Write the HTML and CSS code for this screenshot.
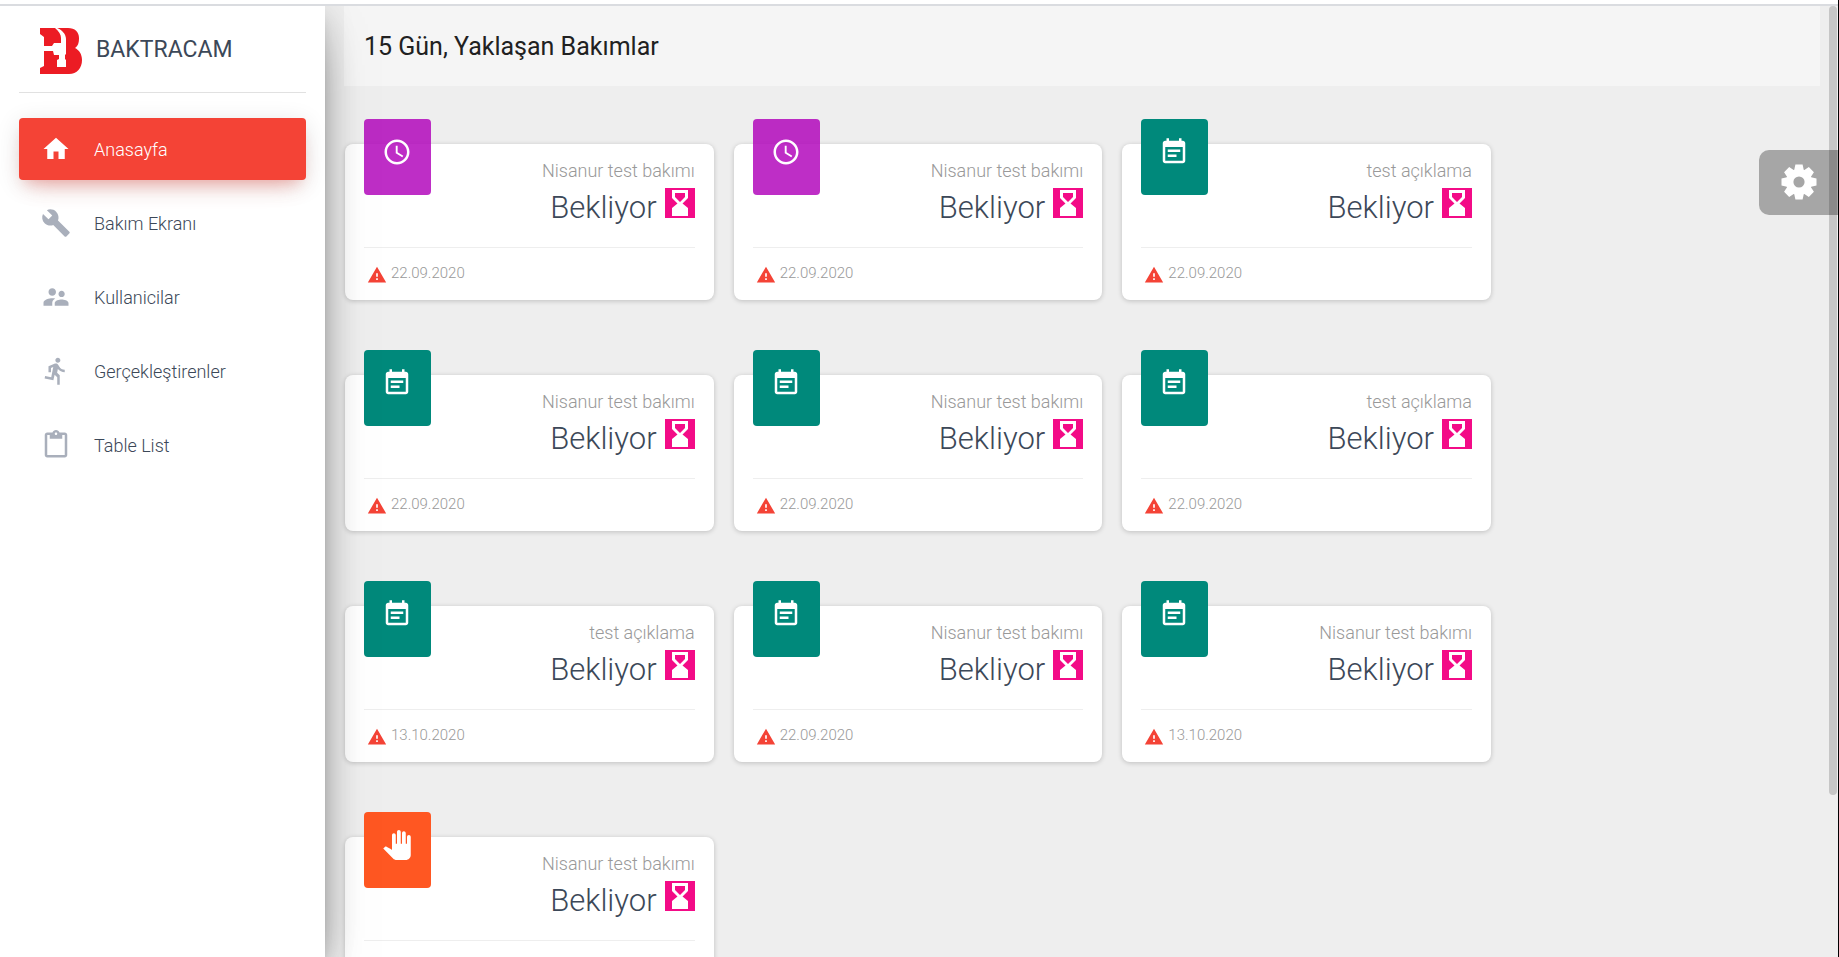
FILE: index.html
```html
<!DOCTYPE html>
<html lang="tr">
<head>
<meta charset="utf-8">
<title>Baktracam</title>
<link rel="stylesheet" href="styles.css">
</head>
<body>
<svg class="sprite" aria-hidden="true">
  <symbol id="home" viewBox="0 0 24 24"><path d="M10 20v-6h4v6h5v-8h3L12 3 2 12h3v8z"/></symbol>
  <symbol id="build" viewBox="0 0 24 24"><path d="M22.7 19l-9.1-9.1c.9-2.3.4-5-1.5-6.9-2-2-5-2.4-7.4-1.3L9 6 6 9 1.6 4.7C.4 7.1.9 10.1 2.9 12.1c1.9 1.9 4.6 2.4 6.9 1.5l9.1 9.1c.4.4 1 .4 1.4 0l2.3-2.3c.5-.4.5-1.1.1-1.4z"/></symbol>
  <symbol id="people" viewBox="0 0 24 24"><path d="M16.5 12c1.38 0 2.49-1.12 2.49-2.5S17.88 7 16.5 7 14 8.12 14 9.5s1.12 2.5 2.5 2.5zM9 11c1.66 0 2.99-1.34 2.99-3S10.66 5 9 5 6 6.34 6 8s1.34 3 3 3zm7.5 3c-1.83 0-5.5.92-5.5 2.75V19h11v-2.25c0-1.83-3.67-2.75-5.5-2.75zM9 13c-2.33 0-7 1.17-7 3.5V19h7v-2.25c0-.85.33-2.34 2.37-3.47C10.5 13.1 9.66 13 9 13z"/></symbol>
  <symbol id="run" viewBox="0 0 24 24"><path d="M13.49 5.48c1.1 0 2-.9 2-2s-.9-2-2-2-2 .9-2 2 .9 2 2 2zm-3.6 13.9l1-4.4 2.1 2v6h2v-7.5l-2.1-2 .6-3c1.3 1.5 3.3 2.5 5.5 2.5v-2c-1.9 0-3.5-1-4.3-2.4l-1-1.6c-.4-.6-1-1-1.7-1-.3 0-.5.1-.8.1l-5.2 2.2v4.7h2v-3.4l1.8-.7-1.6 8.1-4.9-1-.4 2 7 1.4z"/></symbol>
  <symbol id="paste" viewBox="0 0 24 24"><path d="M19 2h-4.180C14.4.84 13.3 0 12 0c-1.3 0-2.4.84-2.820 2H5c-1.1 0-2 .9-2 2v16c0 1.1.9 2 2 2h14c1.1 0 2-.9 2-2V4c0-1.1-.9-2-2-2zm-7 0c.55 0 1 .45 1 1s-.45 1-1 1-1-.45-1-1 .45-1 1-1zm7 18H5V4h2v3h10V4h2v16z"/></symbol>
  <symbol id="clock" viewBox="0 0 24 24"><path d="M11.99 2C6.47 2 2 6.48 2 12s4.47 10 9.99 10C17.52 22 22 17.52 22 12S17.52 2 11.99 2zM12 20c-4.42 0-8-3.58-8-8s3.58-8 8-8 8 3.58 8 8-3.58 8-8 8z"/><path d="M12.5 7H11v6l5.25 3.15.75-1.23-4.5-2.67z"/></symbol>
  <symbol id="note" viewBox="0 0 24 24"><path d="M17 10H7v2h10v-2zm2-7h-1V1h-2v2H8V1H6v2H5c-1.11 0-1.99.9-1.99 2L3 19c0 1.1.89 2 2 2h14c1.1 0 2-.9 2-2V5c0-1.1-.9-2-2-2zm0 16H5V8h14v11zm-5-5H7v2h7v-2z"/></symbol>
  <symbol id="hand" viewBox="0 0 24 24"><path d="M23 5.5V20c0 2.2-1.8 4-4 4h-7.3c-1.08 0-2.1-.43-2.85-1.19L1 14.83s1.26-1.23 1.3-1.25c.22-.19.49-.29.79-.29.22 0 .42.06.6.16.04.01 4.31 2.46 4.31 2.46V4c0-.83.67-1.5 1.5-1.5S11 3.17 11 4v7h1V1.5c0-.83.67-1.5 1.5-1.5S15 .67 15 1.5V11h1V2.5c0-.83.67-1.5 1.5-1.5s1.5.67 1.5 1.5V11h1V5.5c0-.83.67-1.5 1.5-1.5s1.5.67 1.5 1.5z"/></symbol>
  <symbol id="warning" viewBox="0 0 24 24"><path d="M1 21h22L12 2 1 21zm12-3h-2v-2h2v2zm0-4h-2v-4h2v4z"/></symbol>
  <symbol id="hourglass" viewBox="0 0 30 30"><path fill-rule="evenodd" d="M7 2h16v8l-5.500 5.500L23 20v8H7v-8l5.500-4.500L7 10zM10 5v4l5 5 5-5V5z"/></symbol>
  <symbol id="gear" viewBox="-18 -18 36 36">
    <circle r="9.300" fill="none" stroke="currentColor" stroke-width="7.400"/>
    <g id="teeth"><path id="tooth" d="M-5-11L-3.600-17.500h7.200L5-11zM-5 11L-3.600 17.500h7.200L5 11z"/><use href="#tooth" transform="rotate(90)"/></g>
    <use href="#teeth" transform="rotate(45)"/>
  </symbol>
</svg>
<div class="window-edge"></div>
<div class="app">
  <aside class="sidebar">
    <a class="brand" href="#">
      <svg class="logo" viewBox="0 0 42 46" aria-hidden="true"><path fill="#ec1c24" d="M0 0h15c4 3 6 7 6 10v5h-7l-2 3H4V9L0 6zM17 0h11c7 0 11 4 11 10 0 5-1 8-4 10 4 2 7 6 7 12 0 8-5 14-13 14H0v-6l4-2V23h9l1 4h5v4l-2 1v7h9v-7l-1-1v-4l1-1V11C26 6 22 2 17 0z"/></svg>
      <span>BAKTRACAM</span>
    </a>
    <nav class="nav">
      <a class="nav-item active" href="#"><svg class="icon"><use href="#home"/></svg>Anasayfa</a>
      <a class="nav-item" href="#"><svg class="icon"><use href="#build"/></svg>Bakım Ekranı</a>
      <a class="nav-item" href="#"><svg class="icon"><use href="#people"/></svg>Kullanicilar</a>
      <a class="nav-item" href="#"><svg class="icon"><use href="#run"/></svg>Gerçekleştirenler</a>
      <a class="nav-item" href="#"><svg class="icon"><use href="#paste"/></svg>Table List</a>
    </nav>
  </aside>
  <main class="main">
    <header class="header"><h1>15 Gün, Yaklaşan Bakımlar</h1></header>
    <section class="cards" id="cards"></section>
  </main>
  <button class="settings" type="button" aria-label="Ayarlar"><svg><use href="#gear"/></svg></button>
  <div class="scroll-thumb"></div>
</div>
<script src="cards.js"></script>
</body>
</html>
```
FILE: cards.js
```js
const items = [
  ["clock", "Nisanur test bakımı", "22.09.2020"],
  ["clock", "Nisanur test bakımı", "22.09.2020"],
  ["note", "test açıklama", "22.09.2020"],
  ["note", "Nisanur test bakımı", "22.09.2020"],
  ["note", "Nisanur test bakımı", "22.09.2020"],
  ["note", "test açıklama", "22.09.2020"],
  ["note", "test açıklama", "13.10.2020"],
  ["note", "Nisanur test bakımı", "22.09.2020"],
  ["note", "Nisanur test bakımı", "13.10.2020"],
  ["hand", "Nisanur test bakımı", "22.09.2020"]
];

document.getElementById("cards").innerHTML = items.map(([icon, title, date]) => `
  <article class="card">
    <div class="badge ${icon}"><svg class="icon"><use href="#${icon}"/></svg></div>
    <div class="card-body">
      <p class="title">${title}</p>
      <h2 class="status">Bekliyor <svg class="hourglass"><use href="#hourglass"/></svg></h2>
    </div>
    <footer class="card-footer"><svg class="warning"><use href="#warning"/></svg><time>${date}</time></footer>
  </article>`).join("");
```
FILE: styles.css
```css
* { box-sizing: border-box; }

body {
  margin: 0;
  height: 100vh;
  display: flex;
  flex-direction: column;
  overflow: hidden;
  border-right: 1px solid #000;
  background: #fff;
  color: #3c4858;
  font-family: Roboto, sans-serif;
  font-weight: 300;
}

h1, h2, p { margin: 0; }
svg { display: block; fill: currentColor; flex: none; }
a { color: inherit; text-decoration: none; }

.sprite { position: absolute; width: 0; height: 0; }
.icon { width: 30px; height: 30px; }

.window-edge { flex: none; height: 6px; border-bottom: 2px solid #dadce0; }

.app {
  position: relative;
  flex: 1;
  min-height: 0;
  display: flex;
  overflow: hidden;
  background: #eee;
}

.sidebar {
  position: relative;
  z-index: 1;
  flex: none;
  width: 325px;
  padding: 0 19px;
  background: #fff;
  box-shadow: 0 20px 48px -15px rgba(0, 0, 0, .56), 0 5px 31px 0 rgba(0, 0, 0, .12), 0 10px 12px -6px rgba(0, 0, 0, .2);
}

.brand {
  display: flex;
  align-items: flex-start;
  gap: 14px;
  height: 87px;
  padding: 22px 21px 0;
  border-bottom: 1px solid #e1e1e1;
  font-size: 23px;
  font-weight: 400;
  line-height: 44px;
}

.logo { width: 42px; height: 46px; }

.nav { display: flex; flex-direction: column; gap: 12px; padding-top: 25px; }

.nav-item {
  display: flex;
  align-items: center;
  gap: 23px;
  height: 62px;
  padding: 0 22px;
  border-radius: 4px;
  font-size: 18px;
}

.nav-item .icon { color: #a9afbb; }

.nav-item.active {
  background: #f44336;
  color: #fff;
  box-shadow: 0 15px 25px -12px rgba(244, 67, 54, .28), 0 5px 25px 0 rgba(0, 0, 0, .12), 0 9px 12px -6px rgba(244, 67, 54, .2);
}

.nav-item.active .icon { color: #fff; }

.main { flex: 1; min-width: 0; padding: 0 18px 0 19px; }

.header {
  display: flex;
  align-items: center;
  height: 80px;
  padding: 0 20px;
  background: #f5f5f5;
  color: #212121;
}

.header h1 { font-size: 25px; font-weight: 400; }

.cards {
  display: grid;
  grid-template-columns: repeat(3, 1fr);
  gap: 75px 20px;
  margin: 58px 329px 0 1px;
}

.card {
  position: relative;
  height: 156px;
  padding: 0 19px;
  border-radius: 8px;
  background: #fff;
  box-shadow: 0 1px 5px rgba(0, 0, 0, .2);
}

.badge {
  position: absolute;
  top: -25px;
  left: 19px;
  width: 67px;
  height: 76px;
  padding: 18px;
  border-radius: 4px;
  color: #fff;
}

.badge.clock { background: rgba(176, 0, 185, .82); }
.badge.note { background: #00897b; }
.badge.hand { background: #ff5722; }

.card-body { height: 104px; padding-top: 14px; border-bottom: 1px solid #eee; text-align: right; }
.title { color: #999; font-size: 18px; line-height: 26px; }

.status {
  display: flex;
  justify-content: flex-end;
  gap: 8px;
  font-size: 31px;
  font-weight: 300;
  line-height: 48px;
}

.hourglass { width: 30px; height: 30px; margin-top: 4px; background: #f30b87; color: #fff; }

.card-footer { display: flex; align-items: flex-start; gap: 4px; padding: 17px 3px; color: #999; font-size: 15px; line-height: 16px; }
.warning { width: 20px; height: 20px; color: #f44336; }

.settings {
  position: absolute;
  z-index: 2;
  top: 144px;
  right: 0;
  width: 79px;
  height: 65px;
  padding: 0 22px 2px;
  border: 0;
  border-radius: 10px 0 0 10px;
  background: rgba(0, 0, 0, .3);
  color: #fff;
}

.settings svg { width: 36px; height: 36px; }

.scroll-thumb {
  position: absolute;
  top: 0;
  right: 1px;
  width: 8px;
  height: 83%;
  border-radius: 4px;
  background: #c6c6c6;
}
```
